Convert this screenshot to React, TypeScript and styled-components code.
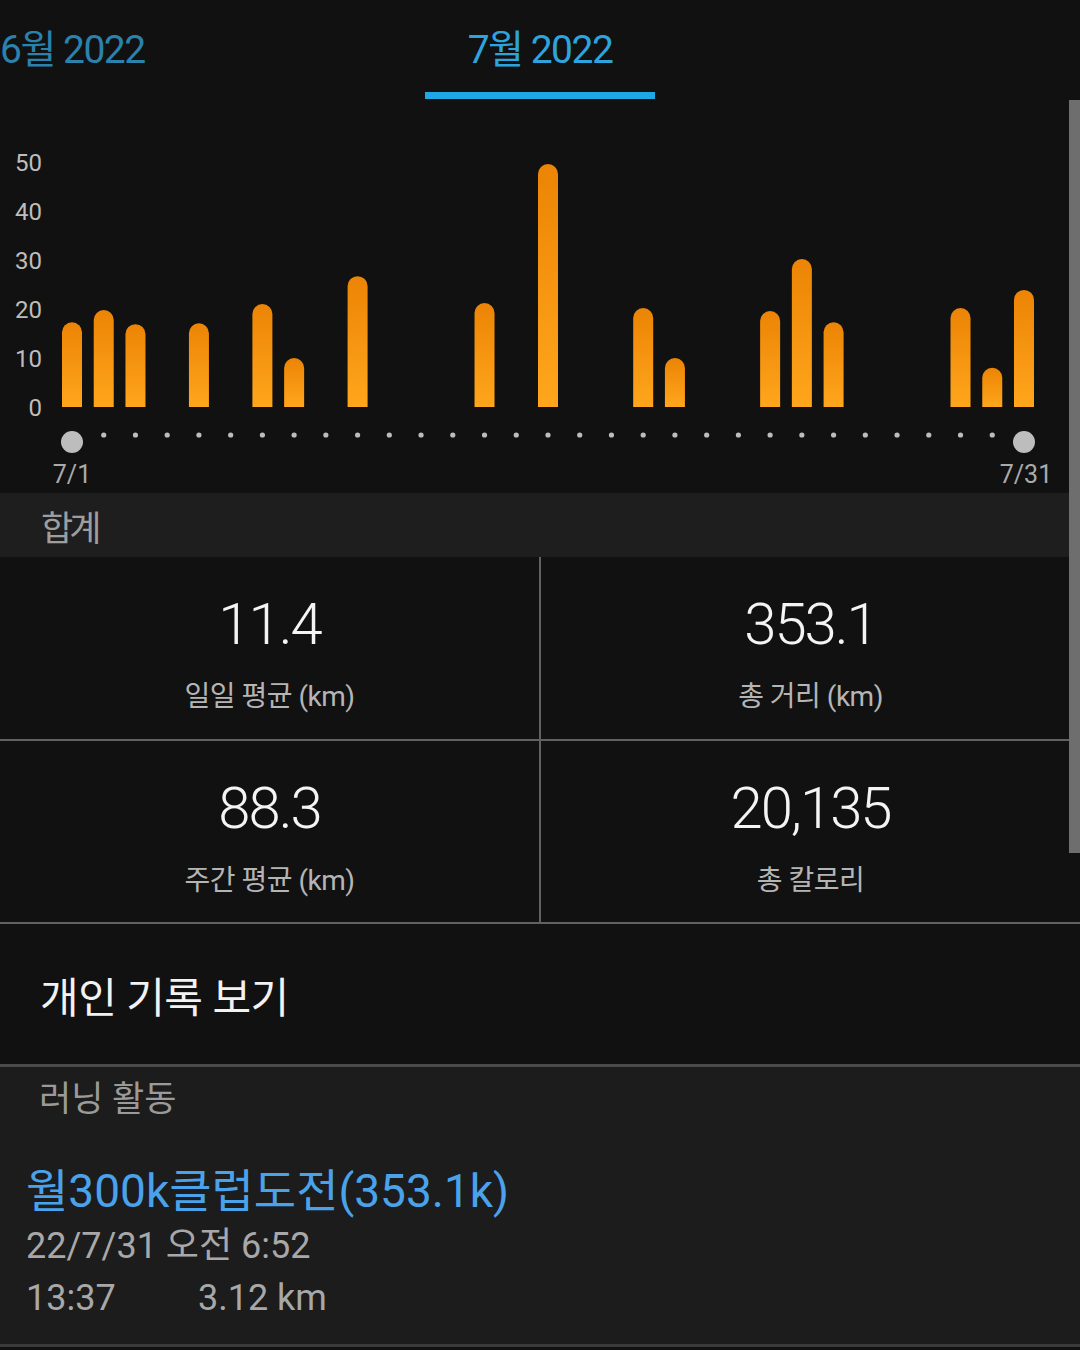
import React from 'react'
import styled, { createGlobalStyle } from 'styled-components'

const GlobalStyle = createGlobalStyle`
    html, body {
        margin: 0;
        padding: 0;
        background: #111111;
    }
    body {
        font-family: Roboto, "Noto Sans CJK KR", sans-serif;
        color: #f2f2f2;
    }
`

// 7월 일별 거리 (km)
const daily = [
    17.3, 19.8, 16.9, 0, 17.1, 0, 21.0, 10.0, 0, 26.7,
    0, 0, 0, 21.2, 0, 49.6, 0, 0, 20.2, 10.0,
    0, 0, 19.6, 30.2, 17.3, 0, 0, 0, 20.2, 8.0, 23.9,
]

const stats = [
    { value: '11.4', label: '일일 평균 (km)' },
    { value: '353.1', label: '총 거리 (km)' },
    { value: '88.3', label: '주간 평균 (km)' },
    { value: '20,135', label: '총 칼로리' },
]

const BASE_Y = 307
const PX_PER_KM = 4.9
const FIRST_X = 72
const STEP = 31.733

const dayX = (i: number) => FIRST_X + i * STEP

const Chart = () => {
    return (
        <svg width="1080" height="393" viewBox="0 0 1080 393">
            <defs>
                <linearGradient id="barFill" x1="0" y1="0" x2="0" y2="1">
                    <stop offset="0" stopColor="#EC8405" />
                    <stop offset="1" stopColor="#FFA61C" />
                </linearGradient>
            </defs>
            {[0, 10, 20, 30, 40, 50].map((v) => (
                <text
                    key={v}
                    x="42"
                    y={BASE_Y - v * PX_PER_KM + 8.5}
                    textAnchor="end"
                    fontSize="24"
                    fill="#bdbdbd"
                    fontFamily="Roboto, sans-serif"
                >
                    {v}
                </text>
            ))}
            {daily.map((km, i) => {
                if (!km) return null
                const h = km * PX_PER_KM
                const x = dayX(i) - 10
                const top = BASE_Y - h
                return (
                    <path
                        key={i}
                        d={`M${x},${BASE_Y} V${top + 10} A10,10 0 0 1 ${x + 20},${top + 10} V${BASE_Y} Z`}
                        fill="url(#barFill)"
                    />
                )
            })}
            {daily.map((_, i) =>
                i === 0 || i === daily.length - 1 ? (
                    <circle key={i} cx={dayX(i)} cy="342" r="11" fill="#bdbdbd" />
                ) : (
                    <circle key={i} cx={dayX(i)} cy="335" r="2.6" fill="#bdbdbd" />
                )
            )}
            <text x={dayX(0)} y="383" textAnchor="middle" fontSize="25" fill="#aaaaaa" fontFamily="Roboto, sans-serif">
                7/1
            </text>
            <text x={dayX(30) + 2} y="383" textAnchor="middle" fontSize="25" fill="#aaaaaa" fontFamily="Roboto, sans-serif">
                7/31
            </text>
        </svg>
    )
}

const App = () => {
    return (
        <Page>
            <GlobalStyle />
            <Tabs>
                <Tab>6월 2022</Tab>
                <Tab $active>7월 2022</Tab>
                <div />
            </Tabs>
            <ChartWrap>
                <Chart />
            </ChartWrap>
            <SectionHeader>합계</SectionHeader>
            <StatGrid>
                {stats.map((s) => (
                    <StatCell key={s.label}>
                        <StatValue>{s.value}</StatValue>
                        <StatLabel>{s.label}</StatLabel>
                    </StatCell>
                ))}
            </StatGrid>
            <LinkRow>개인 기록 보기</LinkRow>
            <Activity>
                <ActivityLabel>러닝 활동</ActivityLabel>
                <ActivityTitle>월300k클럽도전(353.1k)</ActivityTitle>
                <ActivityMeta>22/7/31 오전 6:52</ActivityMeta>
                <ActivityMeta>
                    <Duration>13:37</Duration>
                    <span>3.12 km</span>
                </ActivityMeta>
            </Activity>
            <ScrollThumb />
        </Page>
    )
}

export default App

const Page = styled.div`
    position: relative;
    width: 1080px;
    height: 1350px;
    overflow: hidden;
    background: #111111;
`

const Tabs = styled.div`
    display: grid;
    grid-template-columns: 1fr 230px 1fr;
    height: 100px;
    align-items: start;
`

const Tab = styled.div<{ $active?: boolean }>`
    justify-self: ${(p) => (p.$active ? 'stretch' : 'start')};
    text-align: center;
    padding-top: 30px;
    padding-bottom: 22px;
    font-size: 39px;
    line-height: 40px;
    letter-spacing: -1.5px;
    white-space: nowrap;
    color: ${(p) => (p.$active ? '#2ea4de' : '#2a82ad')};
    border-bottom: 7px solid ${(p) => (p.$active ? '#1ea9e6' : 'transparent')};
`

const ChartWrap = styled.div`
    height: 393px;
    svg {
        display: block;
    }
`

const SectionHeader = styled.div`
    display: flex;
    align-items: center;
    height: 64px;
    padding-left: 41px;
    background: #1e1e1e;
    color: #9e9e9e;
    font-size: 35px;
    letter-spacing: -4px;
`

const StatGrid = styled.div`
    display: grid;
    grid-template-columns: 539px 1fr;
    grid-auto-rows: 182px 181px;
    gap: 2px;
    background: #616161;
    border-bottom: 2px solid #616161;
`

const StatCell = styled.div`
    display: flex;
    flex-direction: column;
    align-items: center;
    padding-top: 38px;
    background: #111111;
`

const StatValue = styled.div`
    font-size: 58px;
    font-weight: 300;
    line-height: 58px;
    letter-spacing: -2px;
    color: #f4f4f4;
`

const StatLabel = styled.div`
    margin-top: 30px;
    font-size: 28px;
    line-height: 28px;
    letter-spacing: -0.5px;
    color: #b5b5b5;
`

const LinkRow = styled.div`
    display: flex;
    align-items: center;
    height: 140px;
    padding-left: 40px;
    font-size: 42px;
    letter-spacing: -0.5px;
    color: #f2f2f2;
    border-bottom: 3px solid #4a4a4a;
`

const Activity = styled.div`
    height: 280px;
    box-sizing: border-box;
    padding: 16px 0 0 26px;
    background: #1c1c1c;
    border-bottom: 3px solid #3a3a3a;
`

const ActivityLabel = styled.div`
    margin-left: 13px;
    font-size: 35px;
    line-height: 34px;
    color: #9a9a9a;
`

const ActivityTitle = styled.div`
    margin-top: 52px;
    margin-bottom: 6px;
    font-size: 46px;
    line-height: 45px;
    color: #4aa3ea;
`

const ActivityMeta = styled.div`
    display: flex;
    font-size: 36px;
    line-height: 52px;
    color: #a8a8a8;
`

const Duration = styled.span`
    width: 172px;
`

const ScrollThumb = styled.div`
    position: absolute;
    top: 100px;
    right: 0;
    width: 11px;
    height: 753px;
    background: #6e6e6e;
`
